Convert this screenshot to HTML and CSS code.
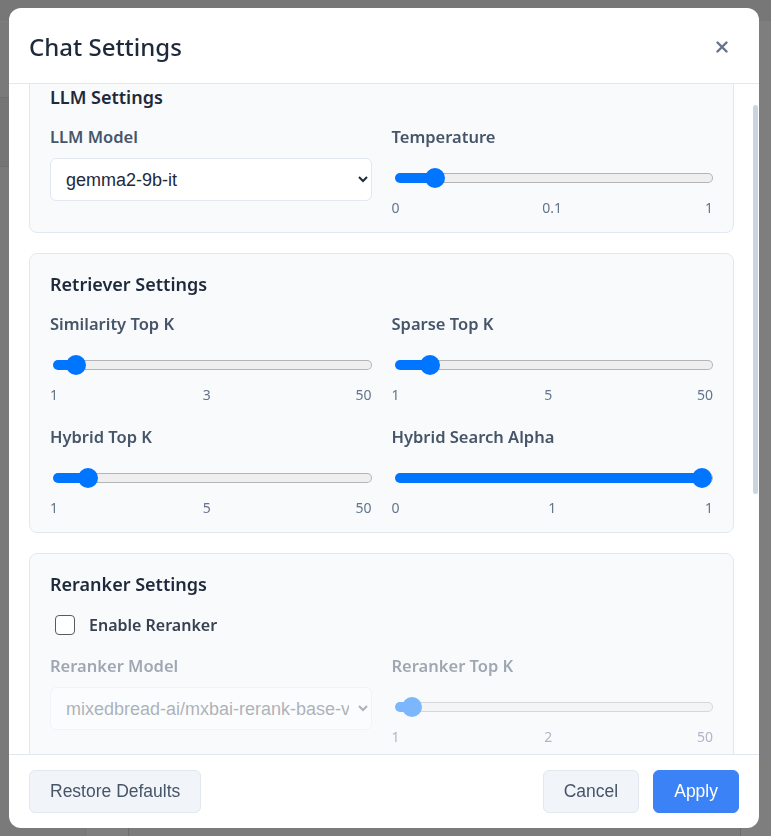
FILE: index.html
```html
<!DOCTYPE html>
<html lang="en">
<head>
<meta charset="utf-8">
<title>Chat Settings</title>
<link rel="stylesheet" href="styles.css">
</head>
<body>
<div class="page">
  <div class="page-top"></div>
  <div class="page-main">
    <aside class="page-side">
      <div class="side-item"></div>
      <div class="side-item"></div>
    </aside>
    <main class="page-content">
      <div class="page-input"></div>
    </main>
  </div>
</div>

<div class="overlay">
  <div class="modal" role="dialog" aria-label="Chat Settings">
    <header class="modal-header">
      <h2 class="modal-title">Chat Settings</h2>
      <button class="close" aria-label="Close">
        <svg width="12" height="12" viewBox="0 0 12 12"><path d="M1.5 1.5 L10.5 10.5 M10.5 1.5 L1.5 10.5" stroke="#64748b" stroke-width="2.4" stroke-linecap="round" fill="none"/></svg>
      </button>
    </header>

    <div class="body-wrap">
      <div class="modal-body">
        <section class="card">
          <h3 class="card-title">LLM Settings</h3>
          <div class="grid">
            <div class="field">
              <label class="field-label">LLM Model</label>
              <select class="select"><option>gemma2-9b-it</option></select>
            </div>
            <div class="field">
              <label class="field-label">Temperature</label>
              <div class="range-wrap"><input class="slider" type="range" min="0" max="1" step="0.1" value="0.1" style="--f:0.1"></div>
              <div class="scale"><span>0</span><span>0.1</span><span>1</span></div>
            </div>
          </div>
        </section>

        <section class="card">
          <h3 class="card-title">Retriever Settings</h3>
          <div class="grid">
            <div class="field">
              <label class="field-label">Similarity Top K</label>
              <div class="range-wrap"><input class="slider" type="range" min="1" max="50" value="3" style="--f:0.0408"></div>
              <div class="scale"><span>1</span><span>3</span><span>50</span></div>
            </div>
            <div class="field">
              <label class="field-label">Sparse Top K</label>
              <div class="range-wrap"><input class="slider" type="range" min="1" max="50" value="5" style="--f:0.0816"></div>
              <div class="scale"><span>1</span><span>5</span><span>50</span></div>
            </div>
            <div class="field">
              <label class="field-label">Hybrid Top K</label>
              <div class="range-wrap"><input class="slider" type="range" min="1" max="50" value="5" style="--f:0.0816"></div>
              <div class="scale"><span>1</span><span>5</span><span>50</span></div>
            </div>
            <div class="field">
              <label class="field-label">Hybrid Search Alpha</label>
              <div class="range-wrap"><input class="slider" type="range" min="0" max="1" step="0.1" value="1" style="--f:1"></div>
              <div class="scale"><span>0</span><span>1</span><span>1</span></div>
            </div>
          </div>
        </section>

        <section class="card">
          <h3 class="card-title">Reranker Settings</h3>
          <label class="check-row">
            <input class="checkbox" type="checkbox">
            <span>Enable Reranker</span>
          </label>
          <div class="grid disabled">
            <div class="field">
              <label class="field-label">Reranker Model</label>
              <select class="select" disabled><option>mixedbread-ai/mxbai-rerank-base-v1</option></select>
            </div>
            <div class="field">
              <label class="field-label">Reranker Top K</label>
              <div class="range-wrap"><input class="slider" type="range" min="1" max="50" value="2" style="--f:0.0204" disabled></div>
              <div class="scale"><span>1</span><span>2</span><span>50</span></div>
            </div>
          </div>
        </section>

        <section class="card">
          <h3 class="card-title">Prompt Settings</h3>
          <div class="grid">
            <div class="field wide">
              <label class="field-label">System Prompt</label>
              <textarea class="textarea">You are a helpful assistant.</textarea>
            </div>
            <div class="field">
              <label class="field-label">Chat History Length</label>
              <div class="range-wrap"><input class="slider" type="range" min="0" max="20" value="5" style="--f:0.25"></div>
              <div class="scale"><span>0</span><span>5</span><span>20</span></div>
            </div>
            <div class="field">
              <label class="field-label">Max Tokens</label>
              <div class="range-wrap"><input class="slider" type="range" min="128" max="4096" value="1024" style="--f:0.226"></div>
              <div class="scale"><span>128</span><span>1024</span><span>4096</span></div>
            </div>
          </div>
        </section>
      </div>
      <div class="scroll-thumb"></div>
    </div>

    <footer class="modal-footer">
      <button class="btn">Restore Defaults</button>
      <div class="footer-right">
        <button class="btn">Cancel</button>
        <button class="btn btn-primary">Apply</button>
      </div>
    </footer>
  </div>
</div>
<script src="script.js"></script>
</body>
</html>
```

FILE: styles.css
```css
* { box-sizing: border-box; }

html, body {
  margin: 0;
  height: 100%;
}

body {
  font-family: "Noto Sans", "Open Sans", sans-serif;
  background: #fdfdfd;
  overflow: hidden;
}

/* page behind the dialog */
.page {
  height: 100vh;
  display: flex;
  flex-direction: column;
}
.page-top {
  height: 22px;
  background: #eeeeee;
  border-bottom: 1px solid #ffffff;
}
.page-main {
  flex: 1;
  display: flex;
}
.page-side {
  width: 86px;
  background: #f4f4f4;
  border-right: 1px solid #e4e4e4;
  padding-top: 75px;
}
.side-item {
  height: 69px;
  border-top: 1px solid #e0e0e0;
  background: #eaeaea;
}
.side-item + .side-item { background: #f4f4f4; }
.page-content {
  flex: 1;
  display: flex;
  flex-direction: column;
  justify-content: flex-end;
  padding: 0 30px 0 42px;
}
.page-input {
  height: 14px;
  border: 1px solid #d8d8d8;
  border-bottom: 0;
  border-radius: 8px 8px 0 0;
  background: #f6f6f6;
}

/* dialog */
.overlay {
  position: fixed;
  inset: 0;
  background: rgba(0, 0, 0, 0.5);
  display: flex;
  align-items: center;
  justify-content: center;
  padding-right: 3px;
}
.modal {
  width: 750px;
  height: 98vh;
  background: #ffffff;
  border-radius: 12px;
  display: flex;
  flex-direction: column;
  overflow: hidden;
}

.modal-header {
  display: flex;
  align-items: center;
  justify-content: space-between;
  padding: 21px 20px 19px;
  border-bottom: 1px solid #e2e8f0;
}
.modal-title {
  margin: 0;
  font-size: 24px;
  line-height: 35px;
  font-weight: 500;
  color: #1e293b;
}
.close {
  width: 32px;
  height: 32px;
  padding: 0;
  margin-right: 1px;
  border: 0;
  background: none;
  display: flex;
  align-items: center;
  justify-content: center;
}

.body-wrap {
  position: relative;
  flex: 1;
  min-height: 0;
  display: flex;
}
.modal-body {
  flex: 1;
  overflow-y: auto;
  padding: 20px 25px 20px 20px;
  display: flex;
  flex-direction: column;
  gap: 20px;
  scrollbar-width: none;
}
.modal-body::-webkit-scrollbar { display: none; }
.scroll-thumb {
  position: absolute;
  top: 21px;
  right: 1px;
  width: 5px;
  height: 389px;
  border-radius: 3px;
  background: #cbd5e1;
}

.card {
  flex-shrink: 0;
  background: #f8fafc;
  border: 1px solid #e2e8f0;
  border-radius: 8px;
  padding: 19px 20px 14px;
}
.card-title {
  margin: 0 0 19px;
  font-size: 18px;
  line-height: 22px;
  font-weight: 600;
  color: #1e293b;
}

.grid {
  display: grid;
  grid-template-columns: 1fr 1fr;
  column-gap: 20px;
  row-gap: 22px;
}
.grid.disabled { opacity: 0.5; }
.field.wide { grid-column: 1 / -1; }

.field-label {
  display: block;
  margin-bottom: 11px;
  font-size: 16.5px;
  line-height: 20px;
  font-weight: 600;
  color: #475569;
}

.select {
  width: 100%;
  height: 43px;
  padding: 0 6px 0 11px;
  font: 18px "Liberation Sans", Arial, sans-serif;
  color: #1e293b;
  background: #ffffff;
  border: 1px solid #e2e8f0;
  border-radius: 6px;
}

.textarea {
  display: block;
  width: 100%;
  height: 163px;
  padding: 10px 15px;
  font: 16px "Liberation Sans", Arial, sans-serif;
  color: #1e293b;
  background: #ffffff;
  border: 1px solid #e2e8f0;
  border-radius: 6px;
  resize: none;
}

.range-wrap {
  height: 40px;
  display: flex;
  align-items: center;
}
.slider {
  --fill: calc(10px + var(--f) * (100% - 20px));
  -webkit-appearance: none;
  appearance: none;
  width: calc(100% - 2px);
  height: 10px;
  margin: 0 0 0 3px;
  border: 1px solid transparent;
  border-radius: 5px;
  background:
    linear-gradient(#0075ff, #0075ff) 0 0 / var(--fill) 100% no-repeat border-box,
    linear-gradient(#efefef, #efefef) padding-box,
    linear-gradient(#b5b5b5, #b5b5b5) border-box;
}
.slider::-webkit-slider-thumb {
  -webkit-appearance: none;
  appearance: none;
  width: 20px;
  height: 20px;
  border-radius: 50%;
  background: #0075ff;
  border: 0;
}

.scale {
  display: flex;
  justify-content: space-between;
  font-size: 14px;
  line-height: 20px;
  color: #64748b;
}

.check-row {
  display: flex;
  align-items: center;
  height: 22px;
  margin-bottom: 20px;
  font-size: 16px;
  font-weight: 600;
  color: #374151;
}
.checkbox {
  -webkit-appearance: none;
  appearance: none;
  width: 20px;
  height: 20px;
  margin: 0 14px 0 5px;
  background: #ffffff;
  border: 1.5px solid #5b5b5b;
  border-radius: 4px;
}

.modal-footer {
  display: flex;
  align-items: center;
  justify-content: space-between;
  padding: 15px 20px;
  border-top: 1px solid #e2e8f0;
}
.footer-right {
  display: flex;
  gap: 14px;
}
.btn {
  padding: 10px 20px;
  font: 17.5px/21px "Liberation Sans", Arial, sans-serif;
  color: #475569;
  background: #f1f5f9;
  border: 1px solid #e2e8f0;
  border-radius: 6px;
}
.btn-primary {
  color: #ffffff;
  background: #3b82f6;
  border-color: #3b82f6;
}
```

FILE: script.js
```js
document.querySelector('.modal-body').scrollTop = 38;
```
